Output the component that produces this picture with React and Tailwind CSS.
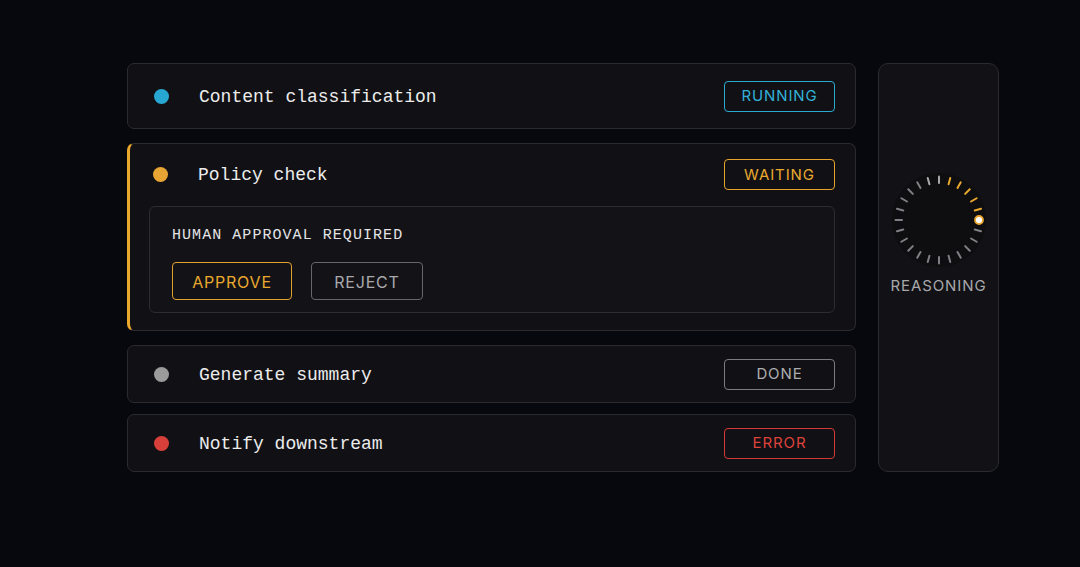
import React from 'react';

const mono = { fontFamily: '"Liberation Mono", "DejaVu Sans Mono", monospace' };

const badgeTone = {
  running: 'border-[#2ba9cf] text-[#33b2d8]',
  waiting: 'border-[#e6a42c] text-[#eaa92e]',
  done: 'border-[#7c7c80] text-[#adadb0]',
  error: 'border-[#d33a35] text-[#de423b]',
};

const dotTone = {
  running: 'bg-[#27a8d2]',
  waiting: 'bg-[#e8a533]',
  done: 'bg-[#9b9b9b]',
  error: 'bg-[#d7403a]',
};

function Badge({ status }) {
  return (
    <div
      className={`w-[111px] h-[31px] rounded-[4px] border flex items-center justify-center pt-[1px] text-[15px] tracking-[0.06em] font-['Inter',sans-serif] ${badgeTone[status]}`}
    >
      {status.toUpperCase()}
    </div>
  );
}

function StepHeader({ status, title }) {
  return (
    <div className="flex items-center justify-between">
      <div className="flex items-center pl-[4px]">
        <span className={`w-[15px] h-[15px] rounded-full ${dotTone[status]}`} />
        <span className="ml-[30px] pt-[2px] text-[18px] text-[#ececec]" style={mono}>
          {title}
        </span>
      </div>
      <Badge status={status} />
    </div>
  );
}

function StepCard({ status, title, height, className = '' }) {
  return (
    <div
      className={`rounded-[7px] border border-[#2a2a2f] bg-[#111115] pl-[22px] pr-[20px] flex flex-col justify-center ${height} ${className}`}
    >
      <StepHeader status={status} title={title} />
    </div>
  );
}

function ReasoningDial() {
  const ticks = Array.from({ length: 24 }, (_, i) => i * 15);
  return (
    <svg width="100" height="100" viewBox="0 0 100 100">
      <circle cx="50" cy="50" r="47" fill="#0e0e11" />
      {ticks.map((a) => {
        if (a === 90) return null;
        const rad = (a * Math.PI) / 180;
        const x1 = 50 + 37 * Math.sin(rad);
        const y1 = 50 - 37 * Math.cos(rad);
        const x2 = 50 + 43.5 * Math.sin(rad);
        const y2 = 50 - 43.5 * Math.cos(rad);
        const amber = a >= 15 && a <= 75;
        const bright = a === 0 || a === 345;
        return (
          <line
            key={a}
            x1={x1}
            y1={y1}
            x2={x2}
            y2={y2}
            stroke={amber ? '#eaa92e' : bright ? '#a9a9ac' : '#808084'}
            strokeWidth="2"
            strokeLinecap="round"
          />
        );
      })}
      <circle cx="90" cy="50" r="4" fill="#ffffff" stroke="#e6a42c" strokeWidth="1.8" />
    </svg>
  );
}

export default function App() {
  return (
    <div className="w-full h-[567px] bg-[#07070e] flex pt-[63px] pl-[127px]">
      <div className="w-[729px] flex flex-col">
        <StepCard status="running" title="Content classification" height="h-[66px]" />

        <div className="mt-[14px] h-[188px] rounded-[7px] border border-[#2a2a2f] border-l-[3px] border-l-[#e9a72c] bg-[#111115] pt-[15px] pr-[20px]">
          <div className="pl-[19px]">
            <StepHeader status="waiting" title="Policy check" />
          </div>
          <div className="ml-[19px] mt-[16px] h-[107px] rounded-[6px] border border-[#2c2c31] bg-[#131317] pl-[22px] pt-[19px]">
            <div className="text-[15px] leading-[20px] tracking-[0.07em] text-[#e4e4e6]" style={mono}>
              HUMAN APPROVAL REQUIRED
            </div>
            <div className="mt-[16px] flex gap-[19px] font-['Inter',sans-serif]">
              <button className="w-[120px] h-[38px] pt-[1px] rounded-[4px] border border-[#e3a12b] text-[#eaa92e] text-[16px] tracking-[0.05em]">
                APPROVE
              </button>
              <button className="w-[112px] h-[38px] pt-[1px] rounded-[4px] border border-[#66666b] text-[#a9a9ac] text-[16px] tracking-[0.05em]">
                REJECT
              </button>
            </div>
          </div>
        </div>

        <StepCard status="done" title="Generate summary" height="h-[58px]" className="mt-[14px]" />
        <StepCard status="error" title="Notify downstream" height="h-[58px]" className="mt-[11px]" />
      </div>

      <div className="ml-[22px] w-[121px] h-[409px] rounded-[10px] border border-[#2a2a2f] bg-[#121216] flex flex-col items-center pt-[106px]">
        <ReasoningDial />
        <div className="mt-[6px] text-[15px] leading-[20px] tracking-[0.06em] text-[#a8a8ab] font-['Inter',sans-serif]">
          REASONING
        </div>
      </div>
    </div>
  );
}
